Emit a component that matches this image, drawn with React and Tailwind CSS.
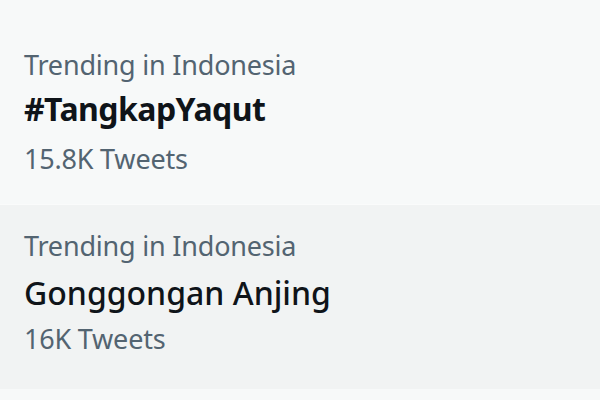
export default function App() {
  const font = { fontFamily: '"Noto Sans", "Open Sans", sans-serif' };
  return (
    <div className="w-[600px] h-[400px] bg-[#f7f9f9] flex flex-col overflow-hidden" style={font}>
      <div className="h-[204px] pl-[24px] pt-[46.5px] flex flex-col">
        <div className="text-[27px] leading-[36px] text-[#536471] tracking-[-0.2px] whitespace-nowrap">Trending in Indonesia</div>
        <div className="mt-[3px] text-[32px] leading-[46px] font-bold text-[#0f1419] tracking-[-0.55px] whitespace-nowrap">#TangkapYaqut</div>
        <div className="mt-[9px] text-[27px] leading-[36px] text-[#536471] tracking-[-0.2px] whitespace-nowrap">15.8K Tweets</div>
      </div>
      <div className="h-px bg-[#fafbfb]" />
      <div className="h-[184px] bg-[#f1f3f3] pl-[24px] pt-[22.5px] flex flex-col">
        <div className="text-[27px] leading-[36px] text-[#536471] tracking-[-0.2px] whitespace-nowrap">Trending in Indonesia</div>
        <div className="mt-[6px] text-[32px] leading-[46px] font-medium text-[#0f1419] whitespace-nowrap">Gonggongan Anjing</div>
        <div className="mt-[5px] text-[27px] leading-[36px] text-[#536471] tracking-[-0.2px] whitespace-nowrap">16K Tweets</div>
      </div>
      <div className="flex-1 bg-[#f7f9f9]" />
    </div>
  );
}
